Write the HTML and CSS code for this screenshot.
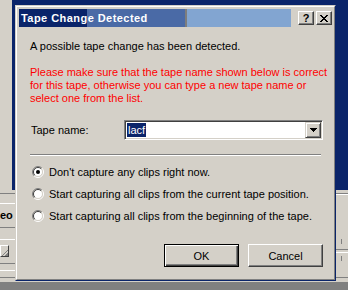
FILE: index.html
```html
<!DOCTYPE html>
<html>
<head>
<meta charset="utf-8">
<title>Tape Change Detected</title>
<link rel="stylesheet" href="styles.css">
</head>
<body>
<div class="app">
  <div class="app-top">
    <div class="side-left"></div>
    <div class="owner"></div>
  </div>
  <div class="app-lower">
    <div class="panel-left">
      <div class="sp h3"></div>
      <div class="hr-dk"></div>
      <div class="sp h9"></div>
      <div class="hr-lt"></div>
      <div class="panel-label">eo</div>
      <div class="hr-dk"></div>
      <div class="sp h11"></div>
      <div class="hr-lt"></div>
      <div class="sp h5"></div>
      <div class="mini-btn"></div>
      <div class="sp h6"></div>
      <div class="hr-dk"></div>
      <div class="sp h6"></div>
      <div class="hr-lt"></div>
      <div class="sp h6"></div>
      <div class="hr-dk"></div>
    </div>
    <div class="panel-mid"></div>
    <div class="panel-right">
      <div class="sp h3"></div>
      <div class="hr-dk"></div>
      <div class="hr-lt"></div>
      <div class="sp h44"></div>
      <div class="tick"></div>
      <div class="sp h5"></div>
      <div class="hr-dk"></div>
      <div class="sp h2"></div>
      <div class="hr-lt"></div>
      <div class="sp h3"></div>
      <div class="tick"></div>
      <div class="sp h16"></div>
      <div class="hr-dk"></div>
    </div>
  </div>
  <div class="statusbar"></div>
</div>

<div class="dialog">
  <div class="dialog-frame">
    <div class="caption">
      <div class="caption-title">Tape Change Detected</div>
      <div class="cap-btn"><span class="help-glyph">?</span></div>
      <div class="cap-btn">
        <svg width="8" height="7" viewBox="0 0 8 7" shape-rendering="crispEdges"><path fill="#000" d="M0 0h2v1h-2z M6 0h2v1h-2z M1 1h2v1h-2z M5 1h2v1h-2z M2 2h4v1h-4z M3 3h2v1h-2z M2 4h4v1h-4z M1 5h2v1h-2z M5 5h2v1h-2z M0 6h2v1h-2z M6 6h2v1h-2z"/></svg>
      </div>
    </div>
    <div class="client">
      <div class="intro">A possible tape change has been detected.</div>
      <div class="warning">Please make sure that the tape name shown below is correct<br>for this tape, otherwise you can type a new tape name or<br>select one from the list.</div>
      <div class="tape-row">
        <div class="tape-label">Tape name:</div>
        <div class="combo">
          <div class="combo-edit"><span class="combo-sel">lacf</span></div>
          <div class="combo-btn">
            <svg width="7" height="4" viewBox="0 0 7 4" shape-rendering="crispEdges"><path fill="#000" d="M0 0h7v1h-7z M1 1h5v1h-5z M2 2h3v1h-3z M3 3h1v1h-1z"/></svg>
          </div>
        </div>
      </div>
      <div class="separator"></div>
      <div class="options">
        <div class="option">
          <svg class="radio" width="12" height="12" viewBox="0 0 12 12"><circle cx="6" cy="6" r="4.5" fill="#fff"/><path d="M2.1 9.9A5.5 5.5 0 0 1 9.9 2.1" fill="none" stroke="#808080"/><path d="M9.9 2.1A5.5 5.5 0 0 1 2.1 9.9" fill="none" stroke="#fff"/><path d="M2.8 9.2A4.5 4.5 0 0 1 9.2 2.8" fill="none" stroke="#404040"/><path d="M9.2 2.8A4.5 4.5 0 0 1 2.8 9.2" fill="none" stroke="#d4d0c8"/><circle cx="6" cy="6" r="2" fill="#000"/></svg>
          <span class="option-text">Don't capture any clips right now.</span>
        </div>
        <div class="option">
          <svg class="radio" width="12" height="12" viewBox="0 0 12 12"><circle cx="6" cy="6" r="4.5" fill="#fff"/><path d="M2.1 9.9A5.5 5.5 0 0 1 9.9 2.1" fill="none" stroke="#808080"/><path d="M9.9 2.1A5.5 5.5 0 0 1 2.1 9.9" fill="none" stroke="#fff"/><path d="M2.8 9.2A4.5 4.5 0 0 1 9.2 2.8" fill="none" stroke="#404040"/><path d="M9.2 2.8A4.5 4.5 0 0 1 2.8 9.2" fill="none" stroke="#d4d0c8"/></svg>
          <span class="option-text">Start capturing all clips from the current tape position.</span>
        </div>
        <div class="option">
          <svg class="radio" width="12" height="12" viewBox="0 0 12 12"><circle cx="6" cy="6" r="4.5" fill="#fff"/><path d="M2.1 9.9A5.5 5.5 0 0 1 9.9 2.1" fill="none" stroke="#808080"/><path d="M9.9 2.1A5.5 5.5 0 0 1 2.1 9.9" fill="none" stroke="#fff"/><path d="M2.8 9.2A4.5 4.5 0 0 1 9.2 2.8" fill="none" stroke="#404040"/><path d="M9.2 2.8A4.5 4.5 0 0 1 2.8 9.2" fill="none" stroke="#d4d0c8"/></svg>
          <span class="option-text">Start capturing all clips from the beginning of the tape.</span>
        </div>
      </div>
      <div class="buttons">
        <div class="btn btn-default">OK</div>
        <div class="btn">Cancel</div>
      </div>
    </div>
  </div>
</div>
</body>
</html>
```

FILE: styles.css
```css
* { box-sizing: border-box; }
html, body { margin: 0; padding: 0; }
body {
  width: 348px;
  height: 290px;
  overflow: hidden;
  position: relative;
  background: #d4d0c8;
  font-family: "Liberation Sans", Arial, sans-serif;
  font-size: 11px;
  color: #000;
}

/* background application */
.app { width: 348px; height: 290px; display: flex; flex-direction: column; }
.app-top { height: 190px; display: flex; flex: none; }
.side-left { width: 12px; background: #d4d0c8; }
.owner { flex: 1; background: #0a246a; }
.app-lower { height: 92px; display: flex; flex: none; }
.panel-left { width: 15px; display: flex; flex-direction: column; overflow: hidden; }
.panel-mid { flex: 1; }
.panel-right { width: 13px; display: flex; flex-direction: column; }
.statusbar { flex: 1; background: #808080; }
.hr-dk { height: 1px; background: #808080; flex: none; }
.hr-lt { height: 1px; background: #fff; flex: none; }
.sp { flex: none; }
.h2 { height: 2px; } .h3 { height: 3px; } .h5 { height: 5px; } .h6 { height: 6px; }
.h9 { height: 9px; } .h11 { height: 11px; } .h16 { height: 16px; } .h44 { height: 44px; }
.panel-label {
  height: 23px; flex: none; line-height: 23px;
  font-weight: bold; font-size: 11px;
  white-space: nowrap;
  padding-left: 0;
}
.mini-btn {
  width: 9px; height: 12px; flex: none;
  border: 1px solid; border-color: #fff #404040 #404040 #fff;
  background: linear-gradient(135deg, #d4d0c8 60%, #808080 60% 70%, #d4d0c8 70% 80%, #808080 80%);
}
.tick { height: 5px; width: 1px; margin-left: 6px; background: #808080; flex: none; }

/* dialog */
.dialog {
  position: absolute;
  left: 15px; top: 5px;
  width: 321px; height: 276px;
  background: #d4d0c8;
  border: 1px solid;
  border-color: #d4d0c8 #0a246a #0a246a #d4d0c8;
}
.dialog-frame {
  height: 100%;
  border: 1px solid;
  border-color: #fff #808080 #808080 #fff;
  padding: 2px;
  display: flex;
  flex-direction: column;
}
.caption {
  height: 18px; flex: none;
  display: flex; align-items: center;
  background: linear-gradient(to right, #0a246a 0 68px, #4a6aa6 68px 166px, #7d7d7d 166px 168px, #82a5d1 168px 272px, #d4d0c8 272px);
}
.caption-title {
  flex: 1;
  padding-left: 2px;
  color: #fff;
  font-weight: bold;
  font-size: 11px;
  letter-spacing: 0.45px;
  line-height: 18px;
  white-space: nowrap;
}
.cap-btn {
  width: 16px; height: 14px; flex: none;
  border: 1px solid; border-color: #fff #404040 #404040 #fff;
  box-shadow: inset -1px -1px #808080;
  background: #d4d0c8;
  display: flex; align-items: center; justify-content: center;
}
.cap-btn + .cap-btn { margin-left: 2px; }
.help-glyph { font-weight: bold; font-size: 11px; line-height: 11px; }

.client {
  flex: 1;
  padding: 13px 9px 0 11px;
  display: flex;
  flex-direction: column;
}
.intro { line-height: 13px; white-space: nowrap; }
.warning { margin-top: 13px; line-height: 13px; color: #ff0000; white-space: nowrap; }
.tape-row { margin-top: 15px; height: 20px; display: flex; align-items: center; }
.tape-label { width: 94px; padding-left: 1px; }
.combo {
  flex: 1; height: 20px;
  border: 1px solid; border-color: #808080 #fff #fff #808080;
  box-shadow: inset 1px 1px #404040, inset -1px -1px #d4d0c8;
  background: #fff;
  padding: 1px;
  display: flex;
}
.combo-edit { flex: 1; display: flex; align-items: center; padding-left: 1px; }
.combo-sel {
  background: #0a246a; color: #fff;
  line-height: 14px; padding: 0 1px;
}
.combo-btn {
  width: 16px; height: 16px; flex: none;
  border: 1px solid; border-color: #d4d0c8 #404040 #404040 #d4d0c8;
  box-shadow: inset 1px 1px #fff, inset -1px -1px #808080;
  background: #d4d0c8;
  display: flex; align-items: center; justify-content: center;
}
.separator {
  margin-top: 14px; margin-right: 2px;
  height: 2px; flex: none;
  border-top: 1px solid #808080;
  border-bottom: 1px solid #fff;
}
.options { margin-top: 5px; display: flex; flex-direction: column; }
.option { height: 22px; display: flex; align-items: center; white-space: nowrap; }
.radio { margin-left: 2px; flex: none; }
.option-text { margin-left: 5px; }
.buttons { margin-top: 17px; display: flex; justify-content: flex-end; gap: 9px; }
.btn {
  width: 75px; height: 23px;
  border: 1px solid; border-color: #fff #404040 #404040 #fff;
  box-shadow: inset -1px -1px #808080;
  display: flex; align-items: center; justify-content: center;
  font-size: 11px;
}
.btn-default {
  border-color: #000;
  box-shadow: inset 1px 1px #fff, inset -1px -1px #404040, inset -2px -2px #808080;
}
```
